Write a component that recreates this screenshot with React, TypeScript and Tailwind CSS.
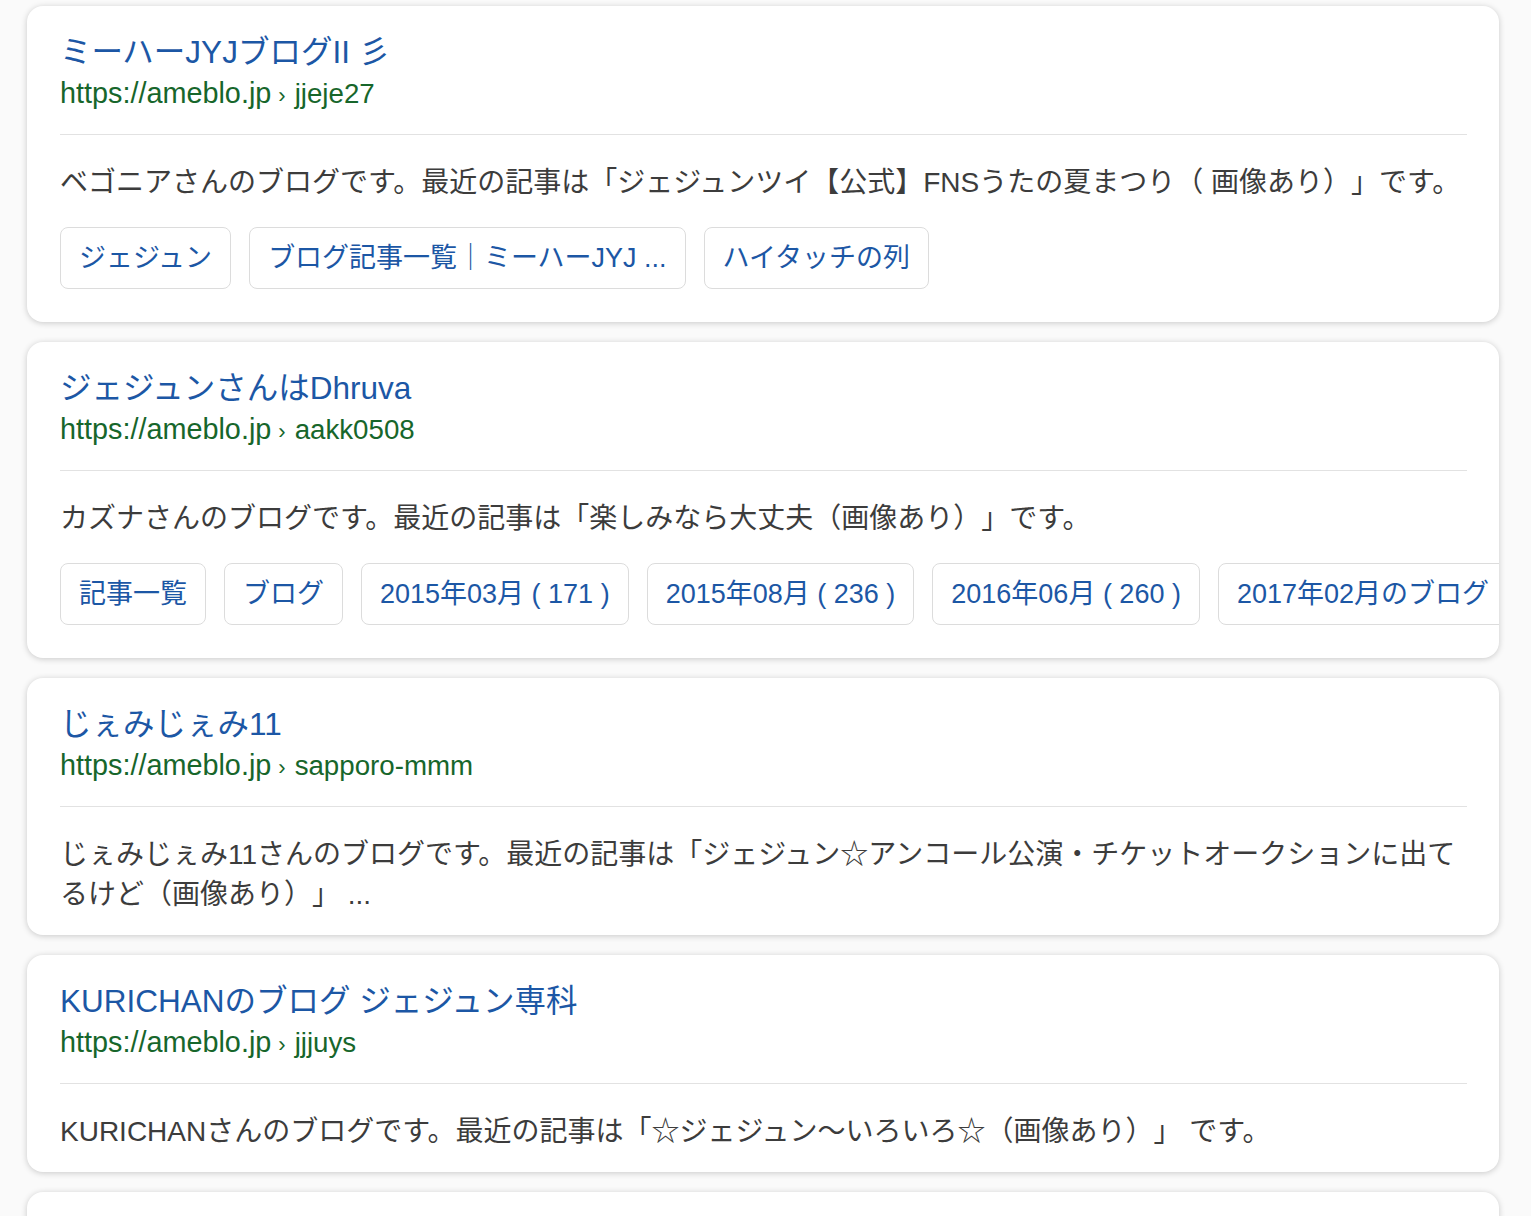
import React from "react";

type Result = {
  title: string;
  path: string;
  snippet: React.ReactNode;
  chips?: string[];
};

const results: Result[] = [
  {
    title: "ミーハーJYJブログII 彡",
    path: "jjeje27",
    snippet:
      "ベゴニアさんのブログです。最近の記事は「ジェジュンツイ【公式】FNSうたの夏まつり（ 画像あり）」です。",
    chips: ["ジェジュン", "ブログ記事一覧｜ミーハーJYJ ...", "ハイタッチの列"],
  },
  {
    title: "ジェジュンさんはDhruva",
    path: "aakk0508",
    snippet: "カズナさんのブログです。最近の記事は「楽しみなら大丈夫（画像あり）」です。",
    chips: [
      "記事一覧",
      "ブログ",
      "2015年03月 ( 171 )",
      "2015年08月 ( 236 )",
      "2016年06月 ( 260 )",
      "2017年02月のブログ",
    ],
  },
  {
    title: "じぇみじぇみ11",
    path: "sapporo-mmm",
    snippet: (
      <>
        <span className="block whitespace-nowrap">
          じぇみじぇみ11さんのブログです。最近の記事は「ジェジュン☆アンコール公演・チケットオークションに出て
        </span>
        <span className="block whitespace-nowrap">るけど（画像あり）」 ...</span>
      </>
    ),
  },
  {
    title: "KURICHANのブログ ジェジュン専科",
    path: "jjjuys",
    snippet: "KURICHANさんのブログです。最近の記事は「☆ジェジュン〜いろいろ☆（画像あり）」 です。",
  },
];

function Card({ r }: { r: Result }) {
  return (
    <div className="bg-white rounded-[16px] shadow-[0_1px_6px_rgba(0,0,0,0.2)] pt-[26px] pb-[20px] overflow-hidden">
      <div className="pl-[33px] pr-[32px]">
        <div className="text-[31.5px] leading-[40px] text-[#1c57a5] whitespace-nowrap">{r.title}</div>
        <div className="mt-[2px] leading-[38px] text-[#17662b] whitespace-nowrap flex items-baseline">
          <span className="text-[28.8px]">https://ameblo.jp</span>
          <span className="text-[22px] ml-[7px] mr-[9px]">›</span>
          <span className="text-[27.7px]">{r.path}</span>
        </div>
        <div className="mt-[19px] h-px bg-[#e2e2e2]" />
        <div className="mt-[28px] text-[28px] leading-[40px] text-[#3c3c3c]">{r.snippet}</div>
      </div>
      {r.chips && (
        <div className="mt-[24px] pb-[13px] pl-[33px] flex gap-[18px] overflow-hidden">
          {r.chips.map((c) => (
            <div
              key={c}
              className="shrink-0 h-[62px] flex items-center px-[18px] border border-[#dcdcdc] rounded-[8px] text-[27px] text-[#1c57a5] whitespace-nowrap"
            >
              {c}
            </div>
          ))}
        </div>
      )}
    </div>
  );
}

export default function App() {
  return (
    <div
      className="min-h-screen bg-[#fafafa] pt-[6px] pl-[27px] pr-[32px] pb-[40px] [text-spacing-trim:space-all]"
      style={{ fontFamily: '"Liberation Sans", "Noto Sans CJK JP", sans-serif' }}
    >
      <div className="flex flex-col gap-[20px]">
        {results.map((r) => (
          <Card key={r.path} r={r} />
        ))}
        <div className="bg-white rounded-[16px] shadow-[0_1px_6px_rgba(0,0,0,0.2)] h-[220px]" />
      </div>
    </div>
  );
}
